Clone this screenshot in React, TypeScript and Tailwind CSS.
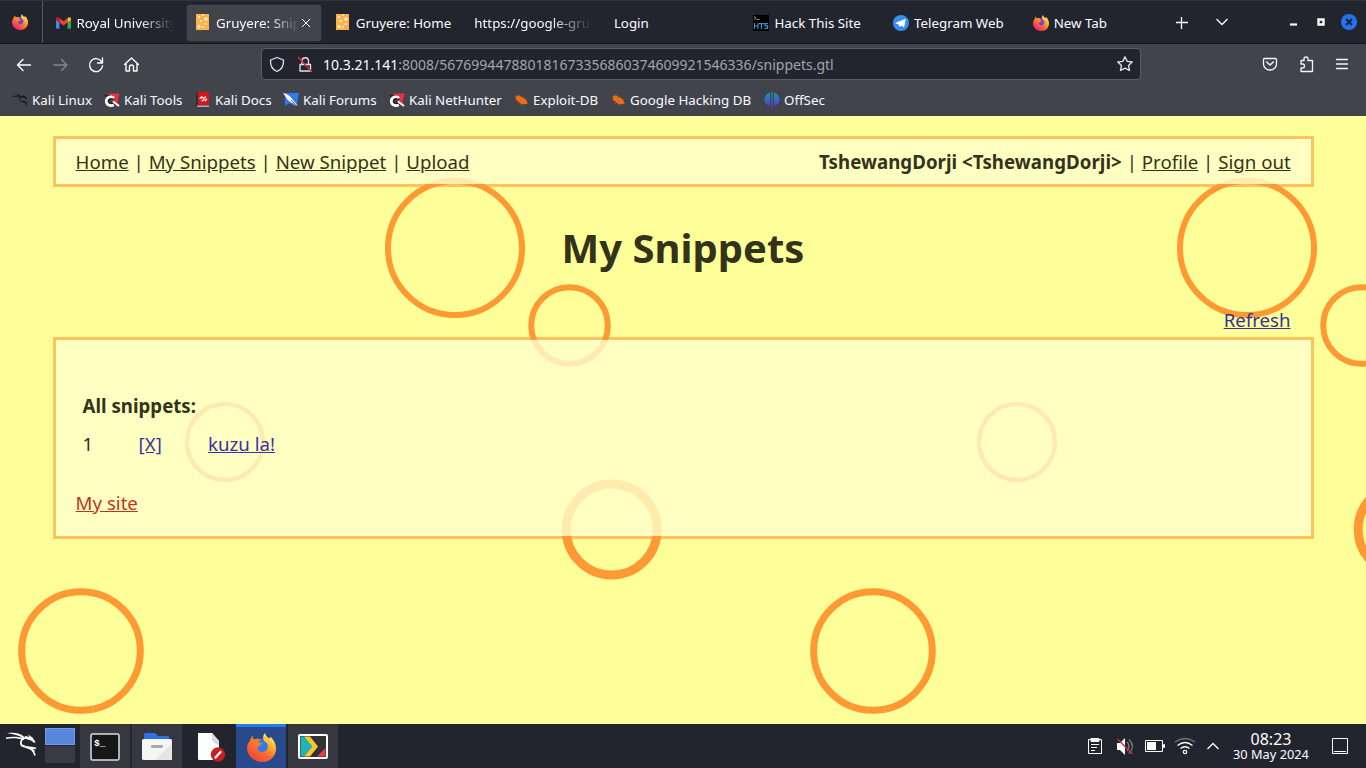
import type { ReactNode } from "react";

function DragonIcon({ width, height }: { width: number; height: number }) {
  return (
    <svg width={width} height={height} viewBox="0 0 31 24" className="shrink-0" fill="none" stroke="currentColor" strokeLinejoin="round">
      <path fill="currentColor" stroke="none" d="M1 1.200C8 0 14 1 18.500 5l-.5 2C13 3 8 2 1 1.200zM0 5.500c7-1.500 13-1 18 1l-.5 1.500C12 6 6 5.500 0 7z" />
      <path fill="currentColor" stroke="none" d="m19 4 4.500 1L22 2.500l4.500 3L29.500 10l-1 1-3.500-2.500-6.500-2z" />
      <path d="M19 6c-5 1.500-5.500 7-1.500 8.500 4 1.200 8.500.5 12.500 2M21 14.500c4 1.500 6.500 4 8 9M17 13.500c3 2.500 8 2 11.500 6" strokeWidth="1.700" />
    </svg>
  );
}

function FirefoxIcon({ size, flat = false }: { size: number; flat?: boolean }) {
  const id = flat ? "fx-flat" : "fx";
  return (
    <svg width={size} height={size} viewBox="0 0 32 32" className="shrink-0">
      <defs>
        <linearGradient id={id} x1="0.85" y1="0.05" x2="0.2" y2="0.95">
          <stop offset="0" stopColor="#fff36b" />
          <stop offset="0.3" stopColor="#ffb42e" />
          <stop offset="0.6" stopColor="#ff6a2f" />
          <stop offset="1" stopColor={flat ? "#e8453c" : "#f0197d"} />
        </linearGradient>
      </defs>
      <circle cx="16" cy="16" r="10" fill={flat ? "#2b7bea" : "#7a3fd8"} />
      <path
        fill={`url(#${id})`}
        d="M3 9c1-3 2-4 3-6 0 2 1 4 2 4 2-1 5-1 7 0l-3 3c1 1 3 1 5 1-1 2-4 3-5 4-1 3 1 6 5 6 3 0 6-3 6-6s-1-4-3-5c-3-3-3-7 0-10 1 4 3 5 5 6l1-2c4 4 6 8 6 13 0 8-6 15-15 15S0 25 0 17c0-3 1-6 3-8z"
      />
      <path fill={flat ? "#f5792c" : "#ff8a2a"} d="M3 9c1-3 2-4 3-6 0 2 1 4 2 4 2-1 5-1 7 0l-3 3c1 1 3 1 5 1-1 2-4 3-5 4-3 0-4-2-5-4z" />
    </svg>
  );
}

function GmailIcon() {
  return (
    <svg width="15" height="12" viewBox="0 0 24 18" className="shrink-0">
      <path fill="#4285f4" d="M0 2.5V16a2 2 0 0 0 2 2h3.5V7z" />
      <path fill="#34a853" d="M24 2.5V16a2 2 0 0 1-2 2h-3.500V7z" />
      <path fill="#ea4335" d="M5.500 1 12 6l6.500-5v7L12 13 5.500 8z" />
      <path fill="#c5221f" d="M0 2.500C0 0 3-1 5.500 1v7L0 4z" />
      <path fill="#fbbc04" d="M24 2.500C24 0 21-1 18.500 1v7L24 4z" />
    </svg>
  );
}

function CheeseIcon() {
  return (
    <svg width="13" height="16" viewBox="0 0 13 16" className="-mt-0.5 ml-px shrink-0">
      <path fill="#fdb04c" d="M0 0h13v16H0z" />
      <g fill="#fff3cf">
        <circle cx="3" cy="3" r="1.200" />
        <circle cx="10" cy="5" r="1.700" />
        <circle cx="5" cy="7" r="1.100" />
        <circle cx="9.500" cy="10" r="1.100" />
        <circle cx="3" cy="12.500" r="1.600" />
        <circle cx="7" cy="13" r="0.900" />
        <circle cx="7" cy="1" r="0.900" />
      </g>
    </svg>
  );
}

function HtsIcon() {
  return (
    <svg width="16" height="16" viewBox="0 0 16 16" className="shrink-0">
      <path fill="#000" d="M0 0h16v16H0z" />
      <path stroke="#bbb" fill="none" d="m1 1.500 2 1.500-2 1.500M3.500 4.500h3" strokeWidth="0.800" />
      <path
        stroke="#3d8fc4"
        fill="none"
        strokeWidth="1.200"
        d="M1.500 8v6M5 8v6M1.500 11H5M6 8.600h5M8.500 8.600V14M15 8.600h-3v2.200h2.600v2.600h-3"
      />
    </svg>
  );
}

function TelegramIcon() {
  return (
    <svg width="16" height="16" viewBox="0 0 16 16" className="shrink-0">
      <circle cx="8" cy="8" r="8" fill="#3390ec" />
      <path fill="#fff" d="m2.800 7.800 9.200-3.900c.5-.2.900.1.700.8l-1.500 7c-.1.500-.5.600-.9.400L8 10.400l-1.200 1.200c-.3.300-.5.200-.6-.2l-.6-2-2.700-.9c-.5-.2-.5-.5-.1-.7z" />
    </svg>
  );
}

function ToolsIcon() {
  return (
    <svg width="16" height="16" viewBox="0 0 16 16" className="shrink-0">
      <path fill="#e0323f" d="M4 1.500h11.500L13.500 12 9 10 6 5z" />
      <path fill="#22242a" d="M0 2.500 7 4l-3 3z" />
      <path fill="none" stroke="#fff" strokeWidth="2.800" d="M10 6C7 3.500 2.300 5.500 2.300 9c0 4 4 5.500 7.500 4" />
      <path fill="none" stroke="#1c1c20" strokeWidth="1.300" d="M10 7.800C7.500 6 4.500 7 4.500 9.200c0 2 2.500 2.800 4.500 1.800" />
      <path fill="none" stroke="#fff" strokeWidth="2" d="m9 9.500 6 4.500" />
    </svg>
  );
}

function DocsIcon() {
  return (
    <svg width="14" height="16" viewBox="0 0 14 16" className="shrink-0">
      <path fill="#3c2734" d="M0 1h3v14H0z" />
      <path fill="#d8151d" d="M2 0h11v13H2z" />
      <path fill="#b9a9ab" d="M1 13.500h12V15H1z" />
      <path fill="none" stroke="#fff" strokeWidth="1.200" d="M6 4 4.500 6 7 5.300M10 4.800 7.500 6l.5 2-2.500 1M9.500 6.800l1 .5L9 9" />
    </svg>
  );
}

function ForumsIcon() {
  return (
    <svg width="16" height="16" viewBox="0 0 16 16" className="shrink-0">
      <path fill="#2b7cf0" d="M2 1h14l-2 11-3 1-9-3z" />
      <path fill="#fff" d="M0 1c5 1 8 4 10 7l5 6c-2 0-4-1-5-3C5 10 3 5 0 1z" />
      <path fill="#2b7cf0" d="M2 8v6l4-3z" />
      <path stroke="#1d2633" d="m8 8 6 6" strokeWidth="0.700" />
    </svg>
  );
}

function BugIcon() {
  return (
    <svg width="15" height="14" viewBox="0 0 15 14" className="shrink-0">
      <path stroke="#8c5438" strokeWidth="0.800" d="M1 2.500 5 6M4 1l3 4M9 3l1 3M13 6l-3 2M1 7l3 1M3 11l3-2M7 13l1-3M14 10l-4-1" />
      <path fill="#ee6c14" d="M1.500 4C3 2 6 2 8 4.500c3 .5 5 3 5.500 6-3 1.500-7 1-8.500-1.500C3 8 1.500 6 1.500 4z" />
    </svg>
  );
}

function OffSecIcon() {
  return (
    <svg width="16" height="16" viewBox="0 0 16 16" className="shrink-0">
      <defs>
        <linearGradient id="offsec" x1="0" y1="0" x2="0" y2="16" gradientUnits="userSpaceOnUse">
          <stop offset="0" stopColor="#239a9c" />
          <stop offset="0.550" stopColor="#3a62c8" />
          <stop offset="1" stopColor="#6b25c9" />
        </linearGradient>
      </defs>
      <path fill="url(#offsec)" d="M6 .8v13C3 13.500.5 11 .5 7.500S3 1.300 6 .8zM7.300 0h1.400v16H7.300zM10 .8c3 .5 5.500 3.200 5.500 6.700s-2.500 6-5.500 6.300z" />
    </svg>
  );
}

function Tab({ icon, label, active, fade }: { icon?: ReactNode; label: string; active?: boolean; fade?: boolean }) {
  return (
    <div className="flex h-11 w-[139.600px] shrink-0 items-center px-[2.500px]">
      <div className={`flex h-9 w-full items-center rounded pr-2 pl-[8.500px] ${active ? "bg-[#42444c] shadow-[0_0_1px_#77787d]" : ""}`}>
        {icon && <div className="mr-[5px] flex h-4 w-4 items-center">{icon}</div>}
        <div
          className={`flex-1 overflow-hidden whitespace-nowrap pt-px ${fade ? "[mask-image:linear-gradient(to_right,black_65%,transparent_100%)]" : ""}`}
        >
          {label}
        </div>
        {active && (
          <svg width="10" height="10" viewBox="0 0 10 10" className="mr-0.5 ml-0.5 shrink-0" stroke="#fbfbfe">
            <path d="m1 1 8 8M9 1 1 9" />
          </svg>
        )}
      </div>
    </div>
  );
}

function TabStrip() {
  return (
    <div className="flex h-11 border-t border-b border-t-[#30323d] border-b-[#15161b] bg-[#23252e] text-[13.330px] text-[#fbfbfe]">
      <div className="flex w-[43px] shrink-0 items-center border-r border-[#595a60] pl-3">
        <FirefoxIcon size={16} />
      </div>
      <div className="flex w-[1118px] shrink-0 pl-[1.500px]">
        <Tab icon={<GmailIcon />} label="Royal University" fade />
        <Tab icon={<CheeseIcon />} label="Gruyere: Snippets" active fade />
        <Tab icon={<CheeseIcon />} label="Gruyere: Home" />
        <Tab label="https://google-gruyere" fade />
        <Tab label="Login" />
        <Tab icon={<HtsIcon />} label="Hack This Site" />
        <Tab icon={<TelegramIcon />} label="Telegram Web" />
        <Tab icon={<FirefoxIcon size={16} />} label="New Tab" />
      </div>
      <svg width="205" height="42" viewBox="1161 1 205 42" fill="none" stroke="#fbfbfe" className="shrink-0">
        <path d="M1176 22.500h12M1181.500 17v12" strokeWidth="1.300" />
        <path d="m1216.500 19 5.500 5.500 5.500-5.500" strokeWidth="1.300" />
        <path d="M1290 24.500h7" strokeWidth="2.200" />
        <path d="M1318.500 19.500h5v5h-5z" strokeWidth="2.400" />
        <circle cx="1349" cy="22" r="8" fill="#2672f5" stroke="none" />
        <path d="m1346 19 6 6M1352 19l-6 6" stroke="#1b2233" strokeWidth="2" />
      </svg>
    </div>
  );
}

function NavBar() {
  return (
    <div className="flex h-[41px] items-center bg-[#42444c]">
      <svg width="261" height="41" viewBox="0 44 261 41" fill="none" stroke="#fbfbfe" strokeWidth="1.400" strokeLinecap="round" strokeLinejoin="round" className="shrink-0">
        <path d="M30.500 65h-13m5.500-5.500L17.500 65l5.500 5.500" />
        <path d="M54 65h13m-5.500-5.500L67 65l-5.500 5.500" stroke="#85868c" />
        <path d="M101.500 61.500A6.500 6.500 0 1 0 102.500 66M102.500 58v5h-5" />
        <path d="m124.500 64.500 7-6.500 7 6.500M126 63.500V71h3.500v-4a2 2 0 0 1 4 0v4h3.500v-7.500" />
      </svg>
      <div className="-mt-px flex h-8 w-[880px] shrink-0 items-center rounded border border-[#5c5d64] bg-[#23252e] text-[14px]">
        <svg width="61" height="30" viewBox="262 49 61 30" fill="none" stroke="#e4e4e8" strokeWidth="1.300" strokeLinejoin="round" strokeLinecap="round" className="shrink-0">
          <path d="m277 57.500 6.500 2.500c.3 5-1.500 9.500-6.500 11.500-5-2-6.800-6.500-6.500-11.500z" />
          <path d="M300 64.500h10.500V71H300zM302 64v-3a3 3 0 0 1 6.500 0v3" />
          <path d="m298.500 57.500 13 14" stroke="#e22850" strokeWidth="1.500" />
        </svg>
        <div className="flex-1 whitespace-nowrap text-[#a3a4aa]">
          <span className="text-[#fbfbfe]">10.3.21.141</span>:8008/567699447880181673356860374609921546336/snippets.gtl
        </div>
        <svg width="16" height="16" viewBox="0 0 16 16" fill="none" stroke="#e4e4e8" strokeWidth="1.300" strokeLinejoin="round" className="mr-[7px] shrink-0">
          <path d="m8 .8 2.200 4.600 5 .6-3.700 3.500 1 5L8 12.100l-4.500 2.400 1-5L.800 6l5-.6z" />
        </svg>
      </div>
      <svg width="225" height="41" viewBox="1141 44 225 41" fill="none" stroke="#f4f4f7" strokeWidth="1.300" strokeLinejoin="round" strokeLinecap="round" className="shrink-0">
        <path d="M1264.500 58.500h11a1 1 0 0 1 1 1V64a6.500 6 0 0 1-13 0v-4.500a1 1 0 0 1 1-1z" />
        <path d="m1266.700 62 3.300 3 3.300-3" strokeWidth="1.600" />
        <path d="M1301 60.500h3v-1.500a2 2 0 0 1 4 0v1.500h4.500v11H1301V68h1.500a2 2 0 0 0 0-4H1301z" />
        <path d="M1336.500 59.500h11M1336.500 64h11M1336.500 68.500h11" />
      </svg>
    </div>
  );
}

function Bookmark({ icon, label, className }: { icon: ReactNode; label: string; className: string }) {
  return (
    <div className={`flex shrink-0 items-center gap-1 whitespace-nowrap ${className}`}>
      <div className="flex h-4 w-4 items-center justify-center">{icon}</div>
      {label}
    </div>
  );
}

function BookmarksBar() {
  return (
    <div className="flex h-[31px] items-center bg-[#42444c] pl-3 text-[13.330px] text-[#fbfbfe]">
      <Bookmark className="w-[92px] [&_svg]:text-[#131418]" icon={<DragonIcon width={16} height={14} />} label="Kali Linux" />
      <Bookmark className="w-[91px]" icon={<ToolsIcon />} label="Kali Tools" />
      <Bookmark className="w-[88px]" icon={<DocsIcon />} label="Kali Docs" />
      <Bookmark className="w-[106px]" icon={<ForumsIcon />} label="Kali Forums" />
      <Bookmark className="w-[124px]" icon={<ToolsIcon />} label="Kali NetHunter" />
      <Bookmark className="w-[97px]" icon={<BugIcon />} label="Exploit-DB" />
      <Bookmark className="w-[154px]" icon={<BugIcon />} label="Google Hacking DB" />
      <Bookmark className="w-[80px]" icon={<OffSecIcon />} label="OffSec" />
    </div>
  );
}

const rings = [
  { x: 455, y: 132, r: 67, w: 6 },
  { x: 569.5, y: 209.5, r: 38.3, w: 6 },
  { x: 225, y: 326, r: 38, w: 4.5 },
  { x: 611.7, y: 413.5, r: 45.5, w: 9 },
  { x: 81, y: 535, r: 59.3, w: 7 },
];

function Rings() {
  return (
    <svg width="1366" height="608" className="absolute inset-0" fill="none" stroke="#ff9933">
      {[0, 792].map((dx) =>
        rings.map((c) => <circle key={`${dx}-${c.x}`} cx={c.x + dx} cy={c.y} r={c.r} strokeWidth={c.w} />)
      )}
    </svg>
  );
}

function Page() {
  return (
    <div className="relative h-[608px] overflow-hidden bg-[#ffff99] text-[18.670px] text-[#33331a]">
      <Rings />
      <div className="relative mr-[52px] ml-[53px] pt-5">
        <div className="flex h-[51px] items-center justify-between border-3 border-[#ff9933]/60 bg-[#ffffcc]/80 bg-clip-padding pr-[20.300px] pl-[19.600px] whitespace-pre">
          <div>
            <u>Home</u> | <u>My Snippets</u> | <u>New Snippet</u> | <u>Upload</u>
          </div>
          <div>
            <b className="tracking-[0.04px]">TshewangDorji &lt;TshewangDorji&gt;</b> | <u>Profile</u> | <u>Sign out</u>
          </div>
        </div>
        <h1 className="mt-[33px] mr-px text-center text-[40px] leading-[56px] font-bold">My Snippets</h1>
        <div className="mt-[30px] flex h-[31px] items-start justify-end pr-[23.500px] text-[#333399]">
          <u>Refresh</u>
        </div>
        <div className="flex h-[202px] flex-col border-3 border-[#ff9933]/60 bg-[#ffffcc]/80 bg-clip-padding pl-[19.600px]">
          <div className="mt-[53px] pl-[7px] leading-[26px] font-bold">All snippets:</div>
          <div className="mt-3 flex pl-[7px] leading-[26px] text-[#3c32a6]">
            <span className="w-14 text-[#33331a]">1</span>
            <u className="w-[69.400px]">[X]</u>
            <u>kuzu la!</u>
          </div>
          <div className="mt-[33px] leading-[26px] text-[#c0341f]">
            <u>My site</u>
          </div>
        </div>
      </div>
    </div>
  );
}

function Task({ children, active, open }: { children: ReactNode; active?: boolean; open?: boolean }) {
  return (
    <div
      className={`mr-0.5 flex h-11 w-[50px] shrink-0 items-center justify-center border-t-3 ${
        active ? "border-[#2b79f2] bg-[#284a8c]" : open ? "border-[#37383f] bg-[#37383f]" : "border-transparent"
      }`}
    >
      {children}
    </div>
  );
}

function Taskbar() {
  return (
    <div className="flex h-11 bg-[#23252e] text-[#fcfcfc]">
      <div className="flex w-[45px] shrink-0 items-center pb-1 pl-1.5">
        <DragonIcon width={31} height={24} />
      </div>
      <div className="mt-1 mr-[5px] flex h-[35px] w-[30px] shrink-0 flex-col gap-px">
        <div className="h-[17px] border border-[#6d9ceb] bg-[#5787da]" />
        <div className="flex-1 bg-[#393a42]" />
      </div>
      <Task open>
        <svg width="30" height="28" viewBox="0 0 30 28" className="-mt-0.5">
          <rect x="1" y="1" width="28" height="26" rx="1.500" fill="#171717" stroke="#ddd" strokeWidth="1.500" />
          <text x="4" y="13" fontSize="9.500" fill="#fff" fontFamily="Liberation Mono, monospace" fontWeight="bold">$_</text>
        </svg>
      </Task>
      <Task open>
        <svg width="32" height="28" viewBox="0 0 32 28" className="-mt-0.5">
          <path fill="#2b72e4" d="M3 1a1 1 0 0 1 1-1h10l3 3h10a1 1 0 0 1 1 1v6H3z" />
          <rect x="1" y="6" width="30" height="21" rx="1.500" fill="#f5f5f5" />
          <path fill="#e5e5e5" d="m31 10-17 17h16a1 1 0 0 0 1-1z" />
          <rect x="10" y="12" width="12" height="3" rx="1" fill="#aaa" />
        </svg>
      </Task>
      <Task>
        <svg width="30" height="30" viewBox="0 0 30 30" className="-mt-px ml-1">
          <path fill="#fff" d="M2 1h14l7 8v19H3a1 1 0 0 1-1-1z" />
          <path fill="#d9dddc" d="m16 1 7 8v5l-7-5z" />
          <circle cx="22" cy="22.500" r="7.200" fill="#c81e22" />
          <path stroke="#fff" strokeWidth="2.300" strokeLinecap="round" d="m19.500 25.500 5-5.500" />
        </svg>
      </Task>
      <Task active>
        <FirefoxIcon size={29} flat />
      </Task>
      <Task open>
        <svg width="30" height="26" viewBox="0 0 30 26" className="-mt-0.5">
          <rect x="1" y="1" width="28" height="23" rx="1" fill="#303238" stroke="#fff" strokeWidth="2" />
          <path fill="#1eb5b4" d="M2.500 2.500H6l9 10-9 10H2.500z" />
          <path fill="#ffc52b" d="M6 2.500h6l8 10-8 10H6l8.500-10z" />
          <path fill="#ec394b" d="M27.500 14v8.500H19z" />
        </svg>
      </Task>
      <div className="flex-1" />
      <svg width="140" height="44" viewBox="1085 724 140 44" fill="none" stroke="#fcfcfc" className="shrink-0">
        <path d="M1088.500 739.500h13v14h-13zM1091 744.500h8M1091 747.500h6M1091 750.500h4" />
        <path d="M1091 738.500h8v3h-8z" fill="#fcfcfc" />
        <path d="M1117 743h3l5-5v17l-5-5h-3z" fill="#fcfcfc" stroke="none" />
        <path d="M1127 742q4 4 0 9M1129 739.500q7 7 0 14" stroke="#777980" strokeWidth="1.400" />
        <path d="m1117.500 739 15 15" stroke="#c6303e" strokeWidth="1.300" />
        <path d="M1145.500 740.500h17v11h-17zM1163.500 744.500h1v3h-1z" />
        <path d="M1147 742h9v8h-9z" fill="#fcfcfc" stroke="none" />
        <path d="M1175 742q10-7 20 0" stroke="#777980" strokeWidth="1.300" />
        <path d="M1177.500 745.500q7.500-6 15 0M1180.500 748.500q4.500-3.500 9 0" strokeWidth="1.300" />
        <circle cx="1185" cy="752" r="1.700" strokeWidth="1.200" />
        <path d="m1207.500 749 5.500-5.500 5.500 5.500" strokeWidth="1.300" />
      </svg>
      <div className="flex w-[92px] shrink-0 flex-col items-center whitespace-nowrap pt-2">
        <div className="text-[16px] leading-[15px]">08:23</div>
        <div className="text-[12.800px] leading-[14px]">30 May 2024</div>
      </div>
      <svg width="49" height="44" viewBox="1317 724 49 44" fill="none" stroke="#fcfcfc" className="shrink-0">
        <path d="M1332.500 738.500h15v15h-15zM1334 751.500h12" />
      </svg>
    </div>
  );
}

export default function App() {
  return (
    <div className="h-[768px] w-[1366px] overflow-hidden font-['Noto_Sans',sans-serif]">
      <TabStrip />
      <NavBar />
      <BookmarksBar />
      <Page />
      <Taskbar />
    </div>
  );
}
